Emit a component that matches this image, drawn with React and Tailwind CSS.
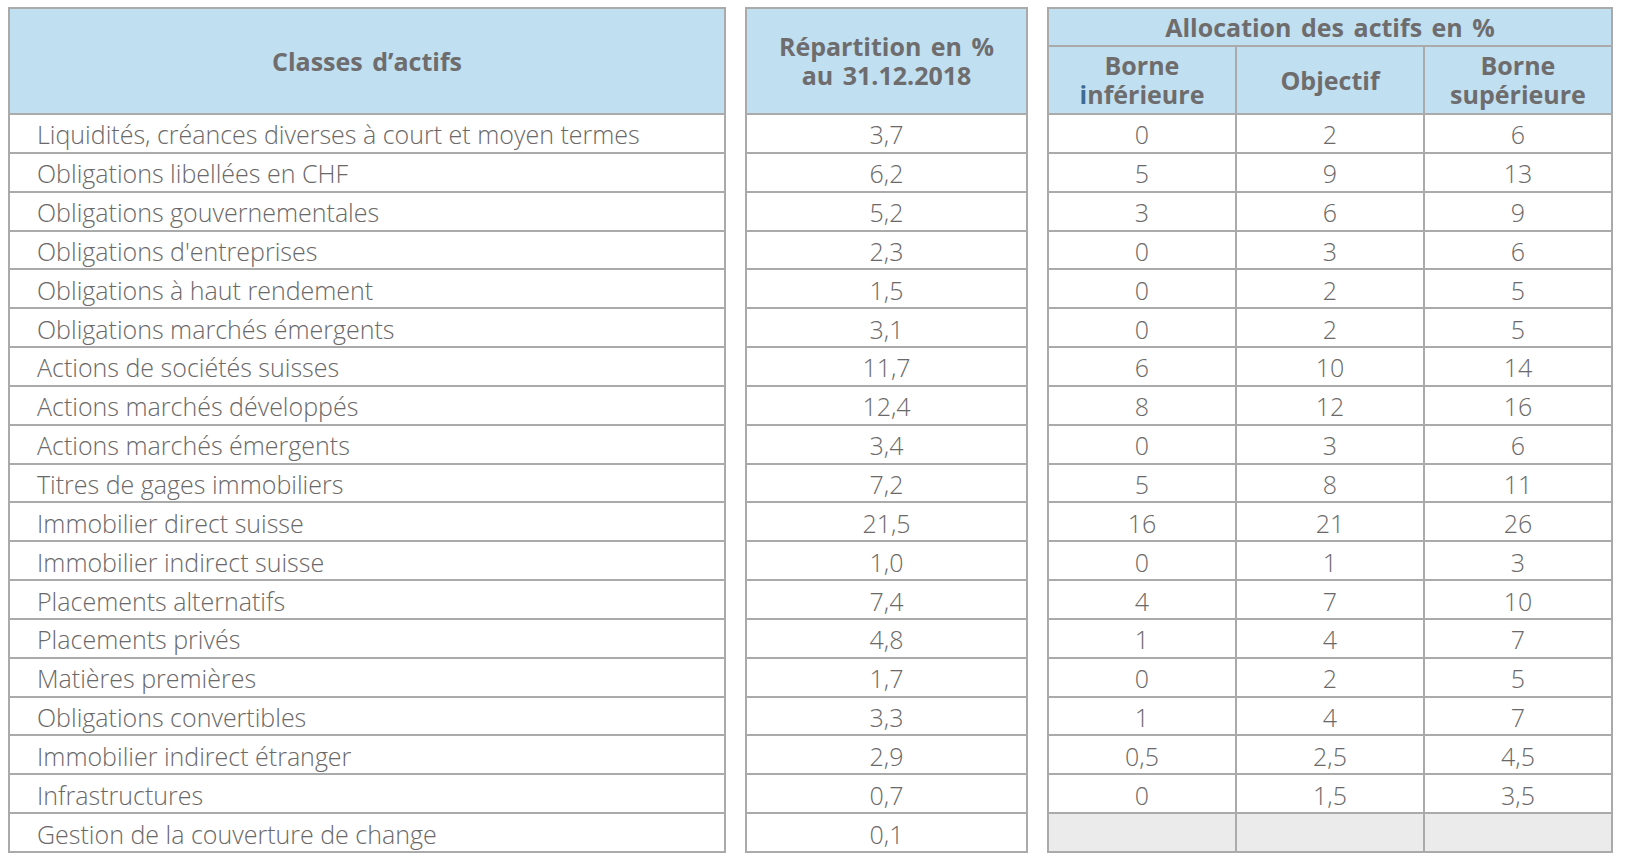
import React from "react";

const rows = [
  ["Liquidités, créances diverses à court et moyen termes", "3,7", "0", "2", "6"],
  ["Obligations libellées en CHF", "6,2", "5", "9", "13"],
  ["Obligations gouvernementales", "5,2", "3", "6", "9"],
  ["Obligations d'entreprises", "2,3", "0", "3", "6"],
  ["Obligations à haut rendement", "1,5", "0", "2", "5"],
  ["Obligations marchés émergents", "3,1", "0", "2", "5"],
  ["Actions de sociétés suisses", "11,7", "6", "10", "14"],
  ["Actions marchés développés", "12,4", "8", "12", "16"],
  ["Actions marchés émergents", "3,4", "0", "3", "6"],
  ["Titres de gages immobiliers", "7,2", "5", "8", "11"],
  ["Immobilier direct suisse", "21,5", "16", "21", "26"],
  ["Immobilier indirect suisse", "1,0", "0", "1", "3"],
  ["Placements alternatifs", "7,4", "4", "7", "10"],
  ["Placements privés", "4,8", "1", "4", "7"],
  ["Matières premières", "1,7", "0", "2", "5"],
  ["Obligations convertibles", "3,3", "1", "4", "7"],
  ["Immobilier indirect étranger", "2,9", "0,5", "2,5", "4,5"],
  ["Infrastructures", "0,7", "0", "1,5", "3,5"],
  ["Gestion de la couverture de change", "0,1", null, null, null],
];

const font = { fontFamily: '"Open Sans", "Noto Sans", sans-serif' };

const head =
  "bg-[#c0dff1] flex items-center justify-center text-center font-bold text-[#6e6c6c] text-[25px] leading-[29px] [word-spacing:3px]";
const body =
  "bg-white flex items-center pt-[3px] text-[#6a6868] font-light text-[25px] leading-none";

export default function App() {
  return (
    <div className="w-[1628px] h-[867px] bg-white" style={font}>
      <div className="flex gap-[19px] pt-[7px] pl-[8px]">
        {/* Table 1 */}
        <div className="grid w-[718px] h-[846px] bg-[#aaaaaa] p-[2px] gap-[2px] grid-cols-1 grid-rows-[104px_repeat(19,minmax(0,1fr))]">
          <div className={head}>Classes d’actifs</div>
          {rows.map((r, i) => (
            <div key={i} className={body + " pl-[27px] whitespace-nowrap"}>
              {r[0]}
            </div>
          ))}
        </div>

        {/* Table 2 */}
        <div className="grid w-[283px] h-[846px] bg-[#aaaaaa] p-[2px] gap-[2px] grid-cols-1 grid-rows-[104px_repeat(19,minmax(0,1fr))]">
          <div className={head}>
            <span>
              Répartition en %
              <br />
              au 31.12.2018
            </span>
          </div>
          {rows.map((r, i) => (
            <div key={i} className={body + " justify-center"}>
              {r[1]}
            </div>
          ))}
        </div>

        {/* Table 3 */}
        <div className="grid w-[566px] h-[846px] bg-[#aaaaaa] p-[2px] gap-[2px] grid-cols-3 grid-rows-[36px_66px_repeat(19,minmax(0,1fr))]">
          <div className={head + " col-span-3"}>Allocation des actifs en %</div>
          <div className={head}>
            <span>
              Borne
              <br />
              <span className="text-[#3d6b95]">i</span>nférieure
            </span>
          </div>
          <div className={head}>Objectif</div>
          <div className={head}>
            <span>
              Borne
              <br />
              supérieure
            </span>
          </div>
          {rows.map((r, i) =>
            [2, 3, 4].map((c) =>
              r[c] === null ? (
                <div key={i + "-" + c} className="bg-[#ebebeb]" />
              ) : (
                <div key={i + "-" + c} className={body + " justify-center"}>
                  {r[c]}
                </div>
              )
            )
          )}
        </div>
      </div>
    </div>
  );
}
